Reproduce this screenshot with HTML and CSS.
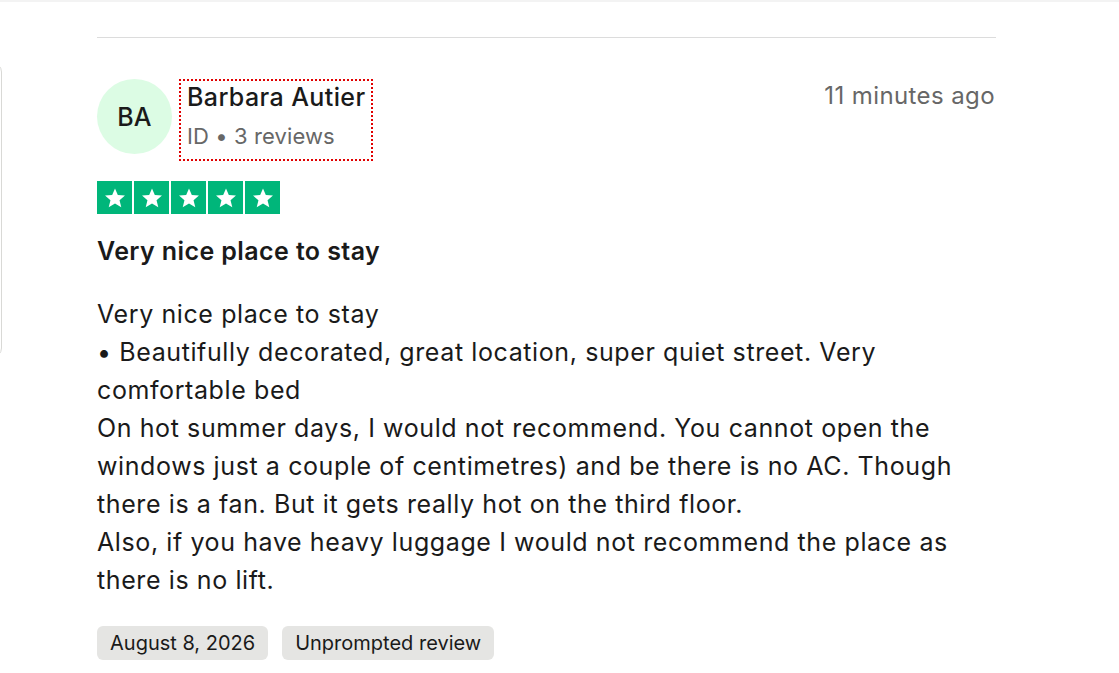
FILE: index.html
```html
<!DOCTYPE html>
<html lang="en">
<head>
<meta charset="utf-8">
<title>Review</title>
<link rel="stylesheet" href="styles.css">
</head>
<body>
<div class="topshade"></div>
<div class="page">
  <aside class="sidecard"></aside>
  <main class="content">
    <div class="divider"></div>
    <article class="review">
      <header class="review-head">
        <div class="consumer">
          <div class="avatar">BA</div>
          <div class="consumer-info">
            <div class="name">Barbara Autier</div>
            <div class="meta">ID • 3 reviews</div>
          </div>
        </div>
        <time class="time">11 minutes ago</time>
      </header>
      <div class="stars">
        <span class="star"><svg viewBox="0 0 24 24"><path d="M12 3.2l2.6 6.1 6.6.5-5 4.3 1.6 6.5L12 17.1l-5.8 3.5 1.6-6.5-5-4.3 6.6-.5z"/></svg></span>
        <span class="star"><svg viewBox="0 0 24 24"><path d="M12 3.2l2.6 6.1 6.6.5-5 4.3 1.6 6.5L12 17.1l-5.8 3.5 1.6-6.5-5-4.3 6.6-.5z"/></svg></span>
        <span class="star"><svg viewBox="0 0 24 24"><path d="M12 3.2l2.6 6.1 6.6.5-5 4.3 1.6 6.5L12 17.1l-5.8 3.5 1.6-6.5-5-4.3 6.6-.5z"/></svg></span>
        <span class="star"><svg viewBox="0 0 24 24"><path d="M12 3.2l2.6 6.1 6.6.5-5 4.3 1.6 6.5L12 17.1l-5.8 3.5 1.6-6.5-5-4.3 6.6-.5z"/></svg></span>
        <span class="star"><svg viewBox="0 0 24 24"><path d="M12 3.2l2.6 6.1 6.6.5-5 4.3 1.6 6.5L12 17.1l-5.8 3.5 1.6-6.5-5-4.3 6.6-.5z"/></svg></span>
      </div>
      <h2 class="title">Very nice place to stay</h2>
      <p class="body">Very nice place to stay<br>• Beautifully decorated, great location, super quiet street. Very comfortable bed<br>On hot summer days, I would not recommend. You cannot open the windows just a couple of centimetres) and be there is no AC. Though there is a fan. But it gets really hot on the third floor.<br>Also, if you have heavy luggage I would not recommend the place as there is no lift.</p>
      <div class="tags">
        <span class="tag">August 8, 2026</span>
        <span class="tag">Unprompted review</span>
      </div>
    </article>
  </main>
</div>
</body>
</html>
```

FILE: styles.css
```css
html, body {
  margin: 0;
  padding: 0;
  background: #ffffff;
}
body {
  font-family: Inter, "Liberation Sans", sans-serif;
  color: #1a1a1a;
  overflow: hidden;
}
.topshade {
  height: 2px;
  background: #f3f3f3;
}
.page {
  display: flex;
  align-items: flex-start;
}
.sidecard {
  box-sizing: border-box;
  width: 300px;
  margin-left: -298px;
  margin-top: 60px;
  height: 296px;
  border: 1px solid #d9d9d6;
  border-radius: 10px;
  flex: none;
}
.content {
  margin-left: 95px;
  width: 899px;
}
.divider {
  margin-top: 35px;
  height: 1px;
  background: #dcdcdc;
}
.review {
  padding-top: 41px;
}
.review-head {
  display: flex;
  justify-content: space-between;
  align-items: flex-start;
}
.consumer {
  display: flex;
  align-items: flex-start;
}
.avatar {
  width: 75px;
  height: 75px;
  border-radius: 50%;
  background: #dcfce4;
  display: flex;
  align-items: center;
  justify-content: center;
  font-size: 25px;
  font-weight: 500;
  color: #1a1a1a;
  letter-spacing: 0.3px;
}
.consumer-info {
  margin-left: 9px;
  margin-top: 2px;
  padding: 0 5px 0 6px;
  outline: 2px dotted #e00000;
  height: 78px;
  box-sizing: border-box;
}
.name {
  font-size: 25px;
  font-weight: 500;
  line-height: 34px;
  letter-spacing: 0.4px;
  margin-top: -1px;
}
.meta {
  margin-top: 6px;
  font-size: 22px;
  line-height: 32px;
  color: #676767;
  letter-spacing: 0.1px;
}
.time {
  font-size: 24px;
  color: #676767;
  line-height: 34px;
  letter-spacing: 0.4px;
  margin-right: 1px;
}
.stars {
  display: flex;
  gap: 2px;
  margin-top: 22px;
}
.star {
  width: 35px;
  height: 33px;
  background: #00b67a;
  display: flex;
  align-items: center;
  justify-content: center;
}
.star svg {
  width: 26px;
  height: 26px;
  fill: #ffffff;
}
.title {
  margin: 21px 0 0 0;
  font-size: 25px;
  font-weight: 600;
  line-height: 32px;
  letter-spacing: 0.4px;
}
.body {
  margin: 28px 0 0 0;
  font-size: 25px;
  line-height: 38px;
  letter-spacing: 0.6px;
  color: #1a1a1a;
}
.tags {
  display: flex;
  gap: 14px;
  margin-top: 27px;
}
.tag {
  background: #e5e5e3;
  border-radius: 6px;
  padding: 0 13px;
  height: 34px;
  display: flex;
  align-items: center;
  font-size: 20px;
  color: #1a1a1a;
}
```
